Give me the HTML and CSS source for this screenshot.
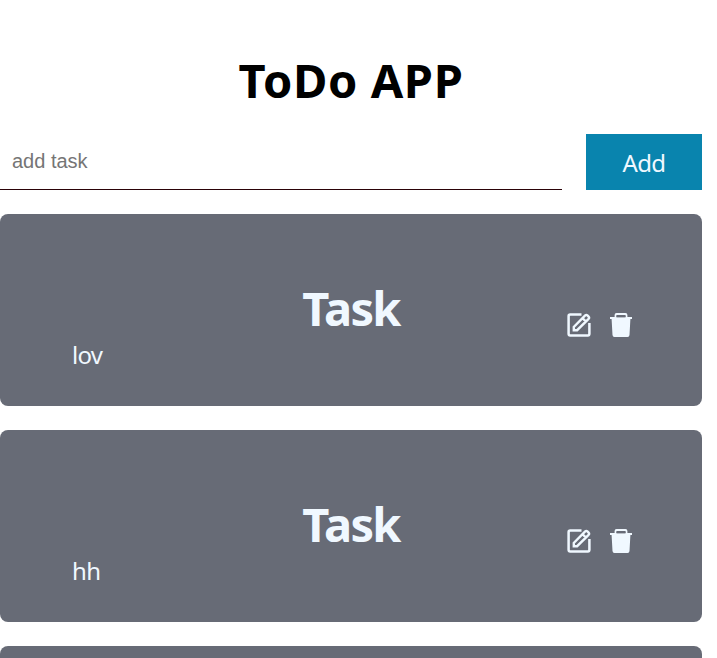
FILE: index.html
```html
<!DOCTYPE html>
<html lang="en">
<head>
<meta charset="utf-8">
<title>ToDo APP</title>
<link rel="stylesheet" href="styles.css">
</head>
<body>
<svg class="symbols" aria-hidden="true">
  <symbol id="edit" viewBox="0 0 24 24">
    <path d="M14.5 1.6H3.2Q1.6 1.6 1.6 3.2V20.8Q1.6 22.4 3.2 22.4H20.8Q22.4 22.4 22.4 20.8V10" fill="none" stroke="currentColor" stroke-width="2.5"/>
    <path d="M6.8 17.2V13.9L18.2 2.4Q19.3 1.4 20.4 2.4L21.6 3.6Q22.6 4.7 21.6 5.8L10.1 17.2ZM15.3 5L19 8.7" fill="none" stroke="currentColor" stroke-width="2.4"/>
  </symbol>
  <symbol id="trash" viewBox="0 0 24 24">
    <path d="M1 4H23V6H21.4L20.5 22Q20.3 24 18.6 24H5.4Q3.7 24 3.5 22L2.6 6H1Z" fill="currentColor"/>
    <path d="M6.5 4V2Q6.5 1 7.5 1H16.5Q17.5 1 17.5 2V4" fill="none" stroke="currentColor" stroke-width="1.8"/>
    <path d="M7.5 3.8H16.5" class="slot"/>
  </symbol>
</svg>
<main class="app">
  <h1 class="title">ToDo APP</h1>
  <form class="entry">
    <input class="field" type="text" placeholder="add task">
    <button class="add" type="button">Add</button>
  </form>
  <section class="list">
    <article class="card">
      <div class="content"><h2>Task</h2><p>lov</p></div>
      <div class="actions"><svg><use href="#edit"/></svg><svg><use href="#trash"/></svg></div>
    </article>
    <article class="card">
      <div class="content"><h2>Task</h2><p>hh</p></div>
      <div class="actions"><svg><use href="#edit"/></svg><svg><use href="#trash"/></svg></div>
    </article>
    <article class="card card-next"></article>
  </section>
</main>
</body>
</html>
```
FILE: styles.css
```css
* { box-sizing: border-box; margin: 0; padding: 0; }
html { height: 100%; overflow: hidden; }
body { height: 100%; overflow: hidden; background: #fff; font-family: "Noto Sans", sans-serif; }
.symbols { position: absolute; width: 0; height: 0; }
.app { width: 702px; padding-top: 48px; }
.title { height: 64px; line-height: 64px; font-size: 47px; font-weight: 700; letter-spacing: 0.6px; text-align: center; color: #000; }
.entry { display: flex; gap: 24px; height: 56px; margin-top: 22px; }
.field { width: 562px; border: 0; border-bottom: 1px solid #2b0208; padding: 0 12px; font: 20px "Liberation Sans", sans-serif; outline: 0; }
.field::placeholder { color: #757575; }
.add { flex: 1; border: 0; padding-top: 2px; background: #0984ae; color: aliceblue; font: 24px/30px "Noto Sans", sans-serif; letter-spacing: -0.6px; }
.list { display: flex; flex-direction: column; gap: 24px; margin-top: 24px; }
.card { position: relative; height: 192px; padding: 62px 72px 0; border-radius: 8px; background: #676b76; color: aliceblue; }
.card-next { height: 12px; border-radius: 8px 8px 0 0; }
.content h2 { height: 64px; line-height: 64px; font-size: 47px; letter-spacing: -1.7px; text-align: center; }
.content p { height: 32px; margin-top: -1px; line-height: 32px; font-size: 24px; letter-spacing: -0.7px; }
.actions { position: absolute; right: 69px; top: 99px; display: flex; gap: 18px; }
.actions svg { display: block; width: 24px; height: 24px; overflow: visible; }
.slot { stroke: #676b76; stroke-width: 1.2; }
```
